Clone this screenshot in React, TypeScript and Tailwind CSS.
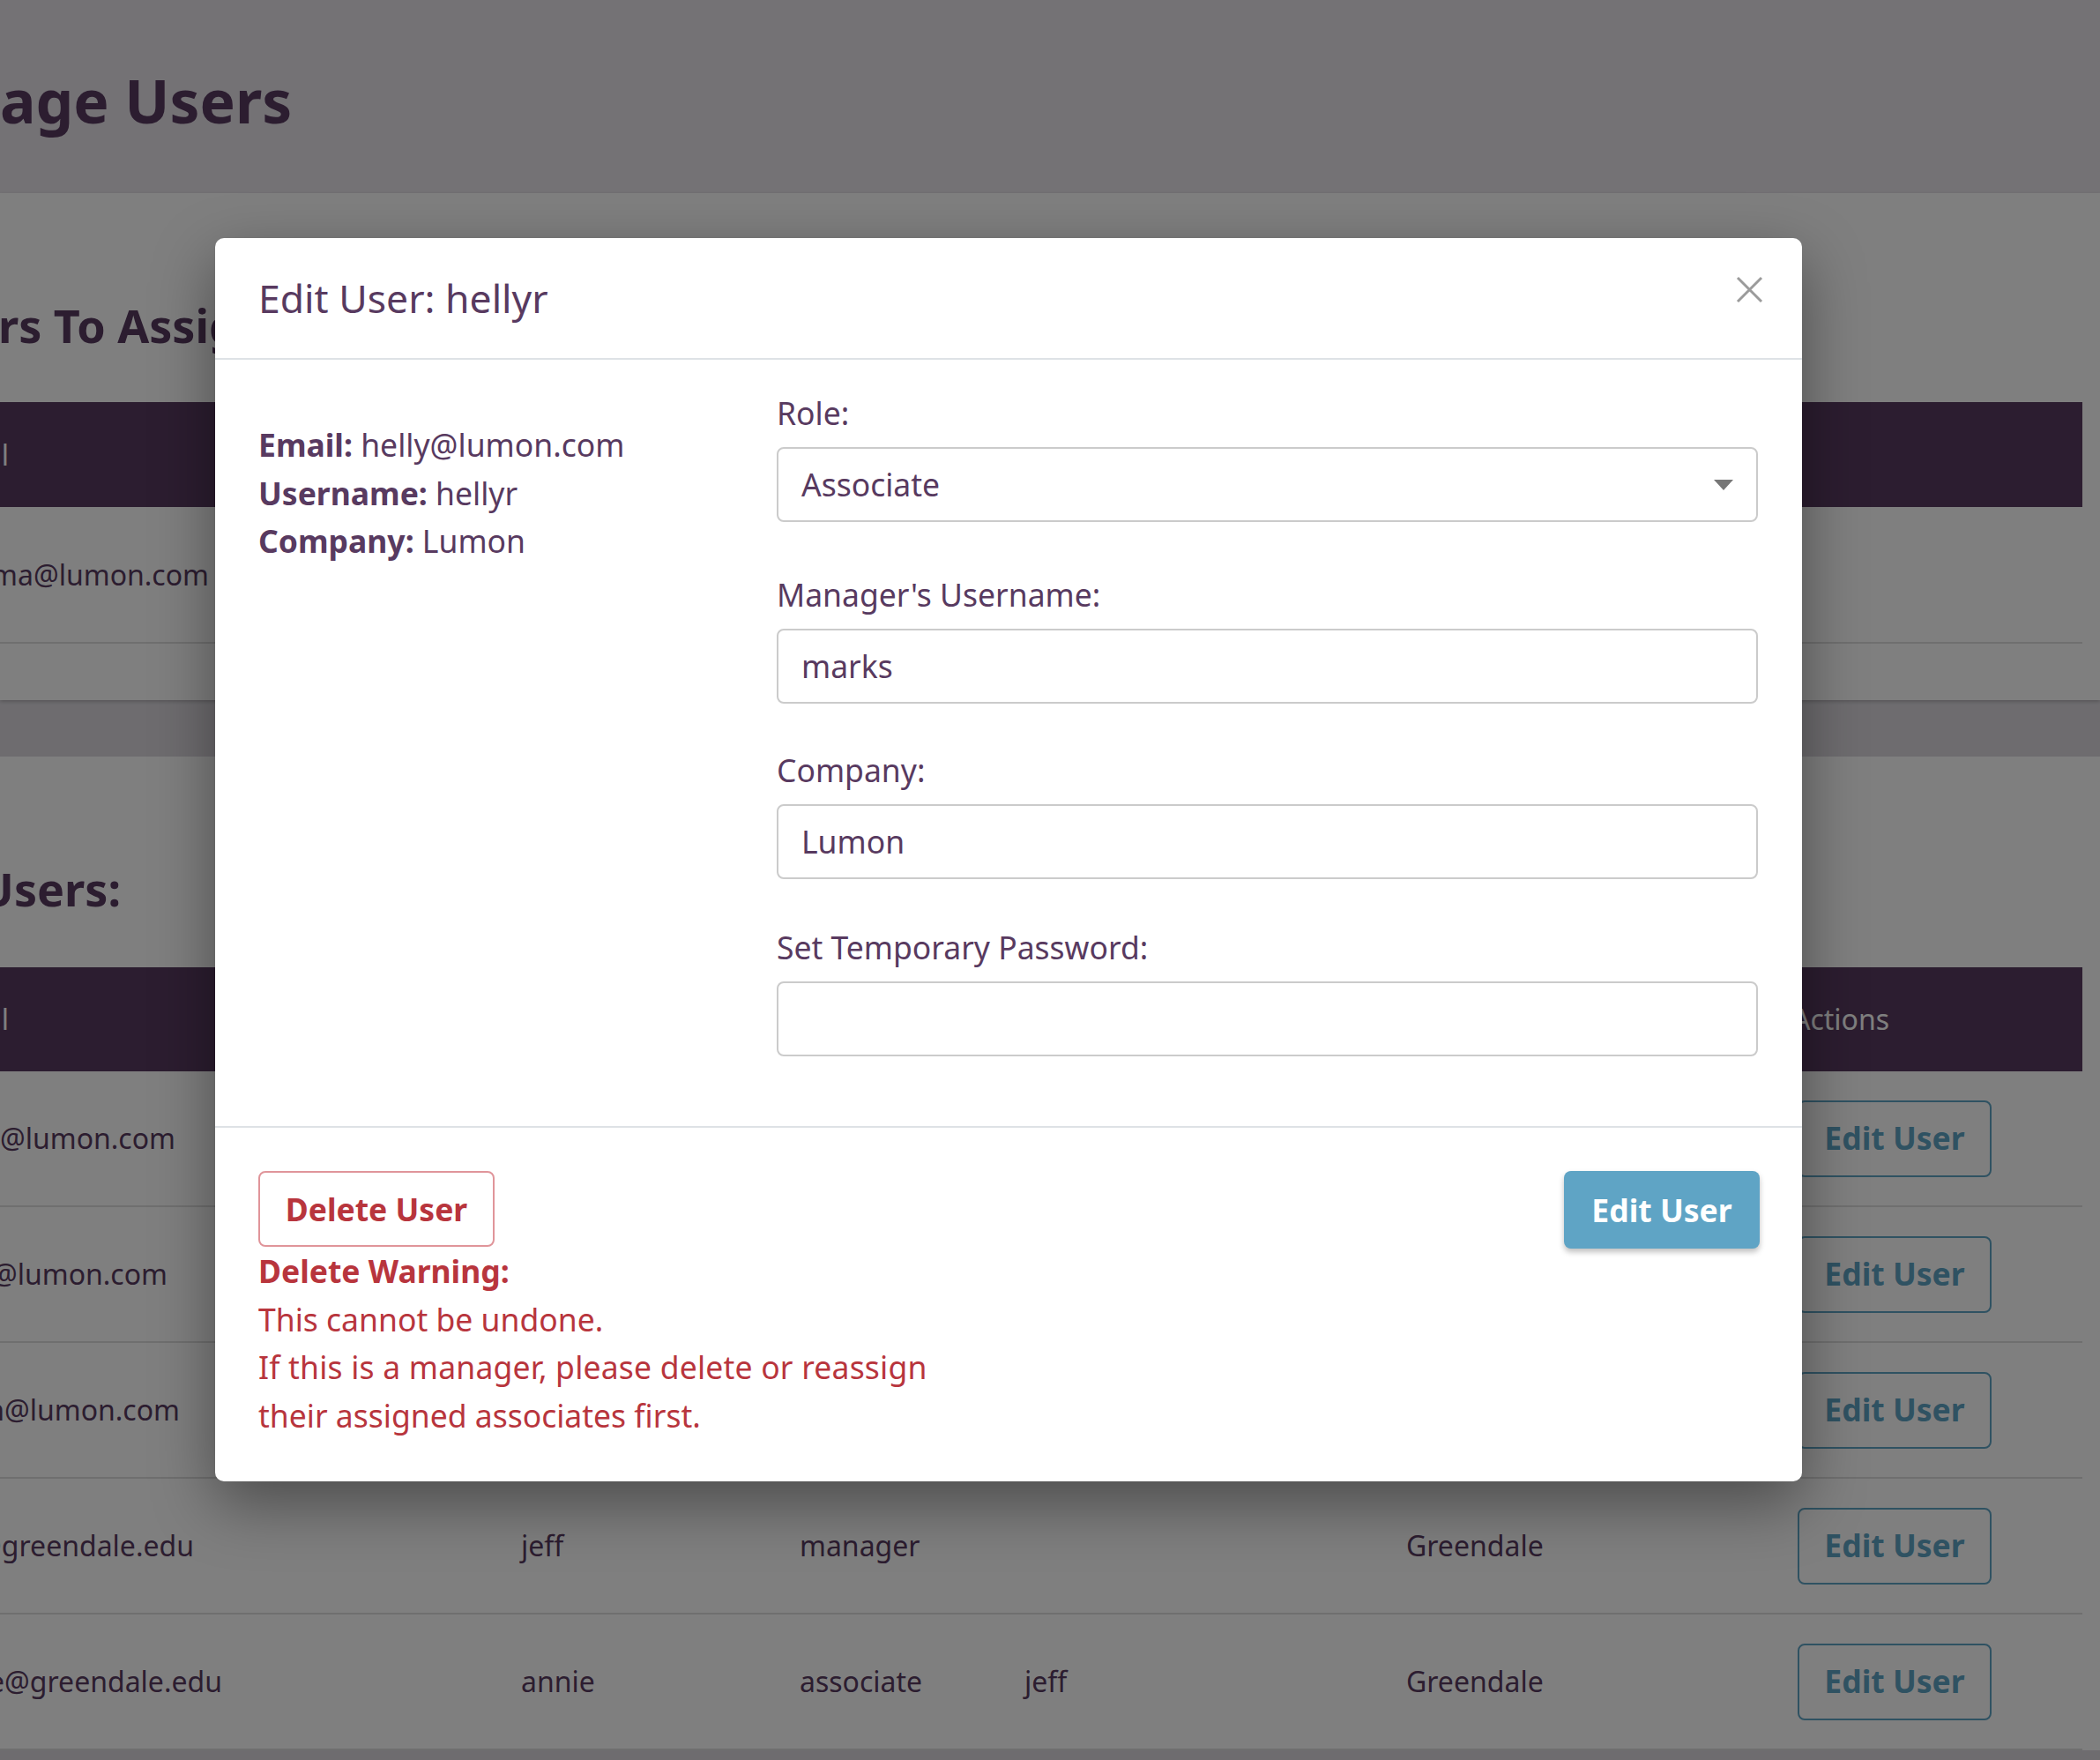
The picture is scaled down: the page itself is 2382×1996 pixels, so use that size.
type Row = {
  email: string;
  emailEnd: string;
  username?: string;
  role?: string;
  manager?: string;
  company?: string;
};

const users: Row[] = [
  { email: 'k@lumon.com', emailEnd: 'w-[199px]' },
  { email: '@lumon.com', emailEnd: 'w-[190px]' },
  { email: 'n@lumon.com', emailEnd: 'w-[204px]' },
  { email: '@greendale.edu', emailEnd: 'w-[220px]', username: 'jeff', role: 'manager', company: 'Greendale' },
  { email: 'e@greendale.edu', emailEnd: 'w-[252px]', username: 'annie', role: 'associate', manager: 'jeff', company: 'Greendale' },
];

function UserRow({ row }: { row: Row }) {
  return (
    <div className="flex h-[154px] items-center border-b-2 border-[#dedede] text-[32px]">
      <div className="w-[591px]">
        <div className={`flex justify-end whitespace-nowrap ${row.emailEnd}`}>{row.email}</div>
      </div>
      <div className="w-[316px]">{row.username}</div>
      <div className="w-[255px]">{row.role}</div>
      <div className="w-[433px]">{row.manager}</div>
      <div className="w-[444px]">{row.company}</div>
      <div className="flex-1">
        <button className="h-[87px] w-[220px] rounded-[8px] border-2 border-[#5fa4c5] text-[35.5px] font-bold text-[#5fa4c5]">
          Edit User
        </button>
      </div>
    </div>
  );
}

function Field({ label, value, className = '', select = false }: { label: string; value: string; className?: string; select?: boolean }) {
  return (
    <div className={className}>
      <label className="block">{label}</label>
      <div className="mt-[11.5px] flex h-[85px] items-center justify-between rounded-[8px] border-2 border-[#cbcbcb] pl-[26px] pr-[26px]">
        <span>{value}</span>
        {select && (
          <svg width="22" height="12" viewBox="0 0 22 12">
            <polygon points="0,0 22,0 11,12" fill="#777777" />
          </svg>
        )}
      </div>
    </div>
  );
}

function EditUserModal() {
  return (
    <div className="absolute left-[244px] top-[270px] w-[1800px] rounded-[10px] bg-white text-[35.5px] leading-[54.5px] text-[#583a60] shadow-[0_25px_70px_rgba(0,0,0,0.4)]">
      <div className="flex items-start justify-between border-b-2 border-[#dee2e6] py-[38px] pl-[49px] pr-[44px]">
        <h5 className="text-[44.5px] leading-[60px]">Edit User: hellyr</h5>
        <button className="mt-[5px]">
          <svg width="31" height="31" viewBox="0 0 31 31">
            <path d="M2 2 L29 29 M29 2 L2 29" stroke="#9b9b9b" strokeWidth="3" />
          </svg>
        </button>
      </div>

      <div className="flex pb-[79px] pl-[49px] pr-[50px] pt-[33px]">
        <div className="w-[588px] pt-[36px]">
          <div><span className="font-bold">Email:</span> helly@lumon.com</div>
          <div><span className="font-bold">Username:</span> hellyr</div>
          <div><span className="font-bold">Company:</span> Lumon</div>
        </div>
        <div className="flex-1">
          <Field label="Role:" value="Associate" select />
          <Field label="Manager's Username:" value="marks" className="mt-[55px]" />
          <Field label="Company:" value="Lumon" className="mt-[48px]" />
          <Field label="Set Temporary Password:" value="" className="mt-[50px]" />
        </div>
      </div>

      <div className="flex items-start justify-between border-t-2 border-[#dee2e6] pb-[48px] pl-[49px] pr-[48px] pt-[49px]">
        <div className="text-[#b8353d]">
          <button className="h-[86px] w-[268px] rounded-[8px] border-2 border-[#e0959a] font-bold">Delete User</button>
          <div className="font-bold">Delete Warning:</div>
          <div>This cannot be undone.</div>
          <div className="tracking-[0.2px]">If this is a manager, please delete or reassign</div>
          <div>their assigned associates first.</div>
        </div>
        <button className="h-[88px] w-[222px] rounded-[8px] bg-[#5fa4c5] font-bold text-white shadow-[0_4px_6px_rgba(0,0,0,0.25)]">
          Edit User
        </button>
      </div>
    </div>
  );
}

export default function App() {
  return (
    <div className="relative h-[1996px] w-[2382px] overflow-hidden bg-[#dcd9df] font-['Noto_Sans',sans-serif] text-[35.5px] text-[#583a60]">
      <header className="h-[219px] bg-[#e8e4ea] pt-[81px]">
        <h1 className="text-[67.7px] font-bold leading-none">age Users</h1>
      </header>

      <section className="h-[575px] bg-white pt-[124px] shadow-[0_2px_4px_rgba(0,0,0,0.2)]">
        <h2 className="-ml-[2px] whitespace-nowrap text-[52px] font-bold leading-none">rs To Assign Managers</h2>
        <div className="mr-[20px] mt-[61px] text-[32px]">
          <div className="flex h-[119px] items-center bg-[#583a60] text-white">
            <div className="flex w-[10px] justify-end whitespace-nowrap">Email</div>
          </div>
          <div className="flex h-[155px] items-center border-b-2 border-[#dedede]">
            <div className="flex w-[237px] justify-end whitespace-nowrap">ma@lumon.com</div>
          </div>
        </div>
      </section>

      <div className="h-[64px]" />

      <section className="bg-white pt-[124px]">
        <div className="flex w-[137px] justify-end whitespace-nowrap">
          <h2 className="text-[52px] font-bold leading-none">Users:</h2>
        </div>
        <div className="mr-[20px] mt-[63px]">
          <div className="flex h-[118px] items-center bg-[#583a60] text-[32px] text-white">
            <div className="w-[591px]">
              <div className="flex w-[10px] justify-end whitespace-nowrap">Email</div>
            </div>
            <div className="w-[316px]">Username</div>
            <div className="w-[255px]">Role</div>
            <div className="w-[433px]">Manager</div>
            <div className="w-[438px]">Company</div>
            <div className="flex-1">Actions</div>
          </div>
          {users.map((u, i) => (
            <UserRow key={i} row={u} />
          ))}
        </div>
      </section>

      <div className="absolute inset-0 bg-black/50" />
      <EditUserModal />
    </div>
  );
}
